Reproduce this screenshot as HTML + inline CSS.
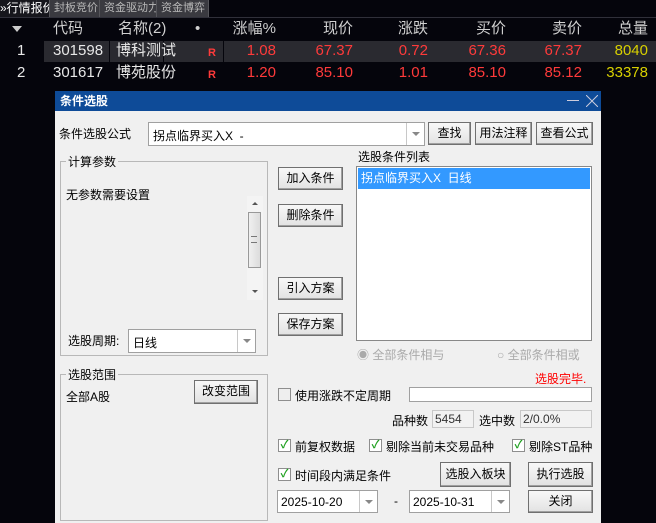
<!DOCTYPE html>
<html><head><meta charset="utf-8"><style>
*{margin:0;padding:0;box-sizing:border-box}
body{width:656px;height:523px;background:#05050c;position:relative;overflow:hidden;font-family:"Liberation Sans","Noto Sans CJK SC",sans-serif}
.a{position:absolute;white-space:nowrap}
.tab{position:absolute;top:0;height:17px;background:#3a3a40;color:#b8b8b8;font-size:11px;line-height:17px;padding-left:4px;border-right:1px solid #55555a;white-space:nowrap;overflow:hidden}
.t{position:absolute;font-size:15px;line-height:22px;white-space:nowrap}
.hd{color:#d0d0d0}
.r{color:#ff3a3a;text-align:right}
.w{color:#e8e8e8}
.y{color:#d8d000;text-align:right}
.dlg{position:absolute;left:55px;top:91px;width:546px;height:432px;background:#f0f0f0;font-size:12px;color:#000}
.ttl{position:absolute;left:0;top:0;width:546px;height:20px;background:#0e4b98;color:#fff;font-weight:bold;font-size:12px;line-height:20px;padding-left:5px}
.btn{position:absolute;background:linear-gradient(#f8f8f8,#e2e2e2);border:1px solid #707070;box-shadow:inset -1px -1px 0 #a0a0a0;font-size:12px;text-align:center;line-height:21px;color:#000}
.box{position:absolute;background:#fff;border:1px solid #a0a0a0}
.grp{position:absolute;border:1px solid #b8b8b8}
.gl{position:absolute;top:-9px;left:5px;background:#f0f0f0;padding:0 2px;font-size:12px}
.dd{position:absolute;right:0;top:0;bottom:0;width:18px;border-left:1px solid #c8c8c8}
.dd:after{content:"";position:absolute;left:5px;top:9px;border-left:4px solid transparent;border-right:4px solid transparent;border-top:4px solid #888}
.cb{position:absolute;width:13px;height:13px;border:1px solid #8e8e8e;background:#fff;color:#21a121;font-size:11px;line-height:11px;text-align:center;font-weight:bold}
.ro{position:absolute;background:#f2f2f2;border:1px solid #c8c8c8;font-size:12px;padding-left:2px;line-height:16px;color:#333}
.dt{position:absolute;left:3px;top:4px;font-size:12px}
</style></head><body>
<div class="tab" style="left:0;width:50px;background:#16161c;color:#fff;padding-left:0;font-size:12px">»行情报价</div>
<div class="tab" style="left:50px;width:50px">封板竞价</div>
<div class="tab" style="left:100px;width:57px">资金驱动力</div>
<div class="tab" style="left:157px;width:52px">资金博弈</div>
<div class="a" style="left:0;top:17px;width:656px;height:1px;background:#30303a"></div>

<div class="a" style="left:12px;top:26px;border-left:5px solid transparent;border-right:5px solid transparent;border-top:6px solid #ccc"></div>
<div class="t hd" style="left:53px;top:18px">代码</div>
<div class="t hd" style="left:118px;top:18px">名称(2)</div>
<div class="t hd" style="left:195px;top:18px">•</div>
<div class="t hd" style="left:200px;top:18px;width:76px;text-align:right">涨幅%</div>
<div class="t hd" style="left:290px;top:18px;width:63px;text-align:right">现价</div>
<div class="t hd" style="left:370px;top:18px;width:58px;text-align:right">涨跌</div>
<div class="t hd" style="left:440px;top:18px;width:66px;text-align:right">买价</div>
<div class="t hd" style="left:520px;top:18px;width:62px;text-align:right">卖价</div>
<div class="t hd" style="left:590px;top:18px;width:58px;text-align:right">总量</div>

<div class="a" style="left:44px;top:41px;width:612px;height:21px;background:#2a2a30"></div>
<div class="a" style="left:109px;top:41px;width:1px;height:21px;background:#05050c"></div>
<div class="a" style="left:163px;top:41px;width:1px;height:21px;background:#05050c"></div>
<div class="a" style="left:223px;top:41px;width:1px;height:21px;background:#05050c"></div>
<div class="t w" style="left:17px;top:40px">1</div>
<div class="t w" style="left:53px;top:40px">301598</div>
<div class="t w" style="left:116px;top:40px">博科测试</div>
<div class="t r" style="left:208px;top:42px;font-size:11px;font-weight:bold">R</div>
<div class="t r" style="left:220px;top:40px;width:56px">1.08</div>
<div class="t r" style="left:290px;top:40px;width:63px">67.37</div>
<div class="t r" style="left:370px;top:40px;width:58px">0.72</div>
<div class="t r" style="left:440px;top:40px;width:66px">67.36</div>
<div class="t r" style="left:520px;top:40px;width:62px">67.37</div>
<div class="t y" style="left:590px;top:40px;width:58px">8040</div>

<div class="t w" style="left:17px;top:62px">2</div>
<div class="t w" style="left:53px;top:62px">301617</div>
<div class="t w" style="left:116px;top:62px">博苑股份</div>
<div class="t r" style="left:208px;top:64px;font-size:11px;font-weight:bold">R</div>
<div class="t r" style="left:220px;top:62px;width:56px">1.20</div>
<div class="t r" style="left:290px;top:62px;width:63px">85.10</div>
<div class="t r" style="left:370px;top:62px;width:58px">1.01</div>
<div class="t r" style="left:440px;top:62px;width:66px">85.10</div>
<div class="t r" style="left:520px;top:62px;width:62px">85.12</div>
<div class="t y" style="left:590px;top:62px;width:58px">33378</div>

<div class="dlg">
<div class="ttl">条件选股<span style="position:absolute;right:22px;top:9px;width:12px;height:1px;background:#ccd"></span>
<svg style="position:absolute;right:3px;top:4px" width="12" height="12"><path d="M0 0L12 12M12 0L0 12" stroke="#ccd" stroke-width="1"/></svg></div>
<div class="a" style="left:4px;top:34px">条件选股公式</div>
<div class="box" style="left:93px;top:31px;width:277px;height:24px"><span class="a" style="left:4px;top:4px">拐点临界买入X &nbsp;-</span><div class="dd"></div></div>
<div class="btn" style="left:373px;top:31px;width:43px;height:23px">查找</div>
<div class="btn" style="left:420px;top:31px;width:57px;height:23px">用法注释</div>
<div class="btn" style="left:481px;top:31px;width:57px;height:23px">查看公式</div>

<div class="grp" style="left:5px;top:70px;width:208px;height:195px"><span class="gl">计算参数</span>
<div class="a" style="left:5px;top:24px">无参数需要设置</div>
<div class="a" style="left:186px;top:34px;width:16px;height:104px;background:#f4f4f4">
<div class="a" style="left:5px;top:6px;border-left:3px solid transparent;border-right:3px solid transparent;border-bottom:3px solid #555"></div>
<div class="a" style="left:1px;top:16px;width:13px;height:56px;background:linear-gradient(90deg,#f0f0f0,#dcdcdc);border:1px solid #999"></div>
<div class="a" style="left:4px;top:40px;width:6px;height:7px;border-top:1px solid #777;border-bottom:1px solid #777"></div>
<div class="a" style="left:5px;top:94px;border-left:3px solid transparent;border-right:3px solid transparent;border-top:3px solid #555"></div>
</div>
<div class="a" style="left:7px;top:170px">选股周期:</div>
<div class="box" style="left:67px;top:167px;width:128px;height:24px"><span class="a" style="left:4px;top:4px">日线</span><div class="dd"></div></div>
</div>

<div class="btn" style="left:223px;top:76px;width:65px;height:23px">加入条件</div>
<div class="btn" style="left:223px;top:113px;width:65px;height:23px">删除条件</div>
<div class="btn" style="left:223px;top:186px;width:65px;height:23px">引入方案</div>
<div class="btn" style="left:223px;top:222px;width:65px;height:23px">保存方案</div>

<div class="a" style="left:303px;top:57px">选股条件列表</div>
<div class="box" style="left:301px;top:75px;width:236px;height:175px;border-color:#888">
<div class="a" style="left:1px;top:1px;width:232px;height:21px;background:#3399ff;color:#fff;line-height:21px;padding-left:3px">拐点临界买入X &nbsp;日线</div></div>
<div class="a" style="left:302px;top:255px;color:#aaa">◉ 全部条件相与</div>
<div class="a" style="left:442px;top:255px;color:#aaa">○ 全部条件相或</div>

<div class="grp" style="left:5px;top:283px;width:208px;height:147px"><span class="gl">选股范围</span>
<div class="a" style="left:5px;top:13px">全部A股</div>
<div class="btn" style="left:133px;top:5px;width:64px;height:24px">改变范围</div>
</div>
<div class="a" style="left:480px;top:279px;color:#f00">选股完毕.</div>
<div class="cb" style="left:223px;top:297px;background:#eee"></div>
<div class="a" style="left:240px;top:296px">使用涨跌不定周期</div>
<div class="box" style="left:354px;top:296px;width:183px;height:15px"></div>
<div class="a" style="left:337px;top:321px">品种数</div>
<div class="ro" style="left:377px;top:319px;width:42px;height:18px">5454</div>
<div class="a" style="left:424px;top:321px">选中数</div>
<div class="ro" style="left:465px;top:319px;width:72px;height:18px">2/0.0%</div>

<div class="cb" style="left:223px;top:348px">✓</div><div class="a" style="left:240px;top:347px">前复权数据</div>
<div class="cb" style="left:314px;top:348px">✓</div><div class="a" style="left:331px;top:347px">剔除当前未交易品种</div>
<div class="cb" style="left:457px;top:348px">✓</div><div class="a" style="left:474px;top:347px">剔除ST品种</div>
<div class="cb" style="left:223px;top:377px">✓</div><div class="a" style="left:240px;top:376px">时间段内满足条件</div>
<div class="btn" style="left:385px;top:371px;width:71px;height:25px;line-height:23px">选股入板块</div>
<div class="btn" style="left:473px;top:371px;width:65px;height:25px;line-height:23px">执行选股</div>
<div class="box" style="left:222px;top:399px;width:101px;height:23px"><span class="dt a">2025-10-20</span><div class="dd"></div></div>
<div class="a" style="left:339px;top:403px">-</div>
<div class="box" style="left:354px;top:399px;width:101px;height:23px"><span class="dt a">2025-10-31</span><div class="dd"></div></div>
<div class="btn" style="left:473px;top:399px;width:65px;height:23px">关闭</div>
</div>
</body></html>
